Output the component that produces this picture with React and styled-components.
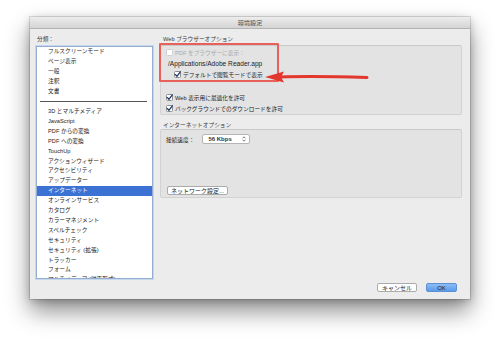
import React from 'react'
import styled, { createGlobalStyle } from 'styled-components'

const Global = createGlobalStyle`
  html, body {
    margin: 0;
    padding: 0;
    background: #fff;
  }
  body {
    font-family: "Liberation Sans", "Noto Sans CJK JP", sans-serif;
    -webkit-font-smoothing: antialiased;
  }
`

const Stage = styled.div`
  width: 499px;
  height: 341px;
  box-sizing: border-box;
  padding: 17px 0 0 30px;
  background: #fff;
  overflow: hidden;
`

const Window = styled.div`
  width: 440px;
  height: 282px;
  background: #ececec;
  display: flex;
  flex-direction: column;
  box-shadow: 0 0 0 1px rgba(0, 0, 0, 0.12), 0 12px 22px rgba(0, 0, 0, 0.45), 0 2px 8px rgba(0, 0, 0, 0.2);
`

const TitleBar = styled.div`
  height: 12px;
  flex: none;
  box-sizing: border-box;
  display: flex;
  align-items: center;
  justify-content: center;
  background: linear-gradient(#ededed, #d4d4d4);
  border-bottom: 1px solid #b3b3b3;
  font-size: 6.2px;
  color: #4a4a4a;
`

const Body = styled.div`
  flex: 1;
  min-height: 0;
  display: flex;
  gap: 7px;
  padding: 0 8px 0 6px;
  font-size: 5.7px;
  color: #1c1c1c;
`

const LeftCol = styled.div`
  width: 117px;
  min-height: 0;
  display: flex;
  flex-direction: column;
  padding-bottom: 20px;
`

const RightCol = styled.div`
  flex: 1;
  display: flex;
  flex-direction: column;
  padding-bottom: 7px;
`

const Caption = styled.div`
  height: ${p => p.$h}px;
  box-sizing: border-box;
  padding: 7px 0 0 ${p => p.$indent}px;
  line-height: 6px;
  color: #3a3a3a;
  flex: none;
`

const List = styled.div`
  flex: 1;
  min-height: 0;
  background: #fff;
  border: 1px solid #93aed0;
  box-shadow: 0 0 0 1px #c8d8ec;
  overflow: hidden;
`

const ListItem = styled.div`
  height: 9.9px;
  line-height: 9.9px;
  padding-left: 11px;
  white-space: nowrap;
  background: ${p => (p.$selected ? '#3b72d3' : 'transparent')};
  color: ${p => (p.$selected ? '#fff' : '#1c1c1c')};
`

const Separator = styled.div`
  height: 10.7px;
  display: flex;
  align-items: center;
  padding: 0 5px 0 3px;

  &::before {
    content: '';
    flex: 1;
    height: 1px;
    background: #555;
  }
`

const Group = styled.div`
  position: relative;
  height: ${p => p.$h}px;
  box-sizing: border-box;
  background: #e3e3e3;
  border: 1px solid #d2d2d2;
  border-top-color: #c9c9c9;
  border-radius: 2px;
  display: flex;
  flex-direction: column;
  padding-top: ${p => p.$pt}px;
  flex: none;
`

const Row = styled.div`
  height: 11px;
  display: flex;
  align-items: center;
  gap: 2px;
  padding-left: ${p => p.$indent}px;
  color: ${p => (p.$disabled ? '#a9a9a9' : '#1c1c1c')};
  white-space: nowrap;
`

const PathRow = styled(Row)`
  font-size: 6.6px;
`

const Spacer = styled.div`
  height: ${p => p.$h}px;
  flex: none;
`

const Select = styled.div`
  width: 48px;
  height: 10px;
  box-sizing: border-box;
  margin-left: 6px;
  background: #fff;
  border: 1px solid #b5b5b5;
  border-radius: 2px;
  display: flex;
  align-items: center;
  justify-content: space-between;
  padding: 0 3px 0 5px;
  font-size: 6px;
  font-weight: bold;
  color: #333;
`

const PushButton = styled.div`
  height: 9px;
  box-sizing: border-box;
  display: flex;
  align-items: center;
  justify-content: center;
  width: ${p => p.$w}px;
  border: 1px solid ${p => (p.$primary ? '#5b8fd6' : '#ababab')};
  border-radius: 2px;
  background: ${p => (p.$primary ? 'linear-gradient(#8cbcf4, #5c9aea)' : '#fff')};
  color: #222;
  white-space: nowrap;
`

const NetButton = styled(PushButton)`
  margin: auto 0 2px 6px;
  font-size: 6px;
`

const Footer = styled.div`
  margin-top: auto;
  display: flex;
  justify-content: flex-end;
  gap: 9px;
  padding-right: 5px;
  font-size: 6px;
`

const Highlight = styled.div`
  position: absolute;
  left: -2px;
  top: -3px;
  width: 120px;
  height: 39px;
  box-sizing: border-box;
  border: 2px solid #e8605a;
  border-radius: 1px;
  pointer-events: none;
`

const Arrow = styled.svg`
  position: absolute;
  left: 104px;
  top: 24px;
`

const Check = ({ checked, disabled }) => (
  <svg width="7" height="7" viewBox="0 0 7 7">
    <rect x="0.5" y="0.5" width="6" height="6" rx="1" fill="#fff" stroke={disabled ? '#cfcfcf' : '#8d8d8d'} />
    {checked && <path d="M1.4 3.6 L2.9 5.3 L6.3 0.8" fill="none" stroke="#1f3a70" strokeWidth="1.3" strokeLinecap="round" strokeLinejoin="round" />}
  </svg>
)

const Stepper = () => (
  <svg width="4" height="6" viewBox="0 0 4 6">
    <path d="M0.5 2.3 L2 0.8 L3.5 2.3 M0.5 3.7 L2 5.2 L3.5 3.7" fill="none" stroke="#555" strokeWidth="0.8" />
  </svg>
)

const categories = [
  'フルスクリーンモード', 'ページ表示', '一般', '注釈', '文書', '-',
  '3D とマルチメディア', 'JavaScript', 'PDF からの変換', 'PDF への変換', 'TouchUp',
  'アクションウィザード', 'アクセシビリティ', 'アップデーター', 'インターネット',
  'オンラインサービス', 'カタログ', 'カラーマネジメント', 'スペルチェック', 'セキュリティ',
  'セキュリティ (拡張)', 'トラッカー', 'フォーム', 'マルチメディア (従来形式)',
]

export default function App() {
  return (
    <Stage>
      <Global />
      <Window>
        <TitleBar>環境設定</TitleBar>
        <Body>
          <LeftCol>
            <Caption $h={17} $indent={1}>分類：</Caption>
            <List>
              {categories.map((c, i) =>
                c === '-' ? <Separator key={i} /> : <ListItem key={i} $selected={c === 'インターネット'}>{c}</ListItem>
              )}
            </List>
          </LeftCol>
          <RightCol>
            <Caption $h={16} $indent={3}>Web ブラウザーオプション</Caption>
            <Group $h={70} $pt={1}>
              <Row $indent={5} $disabled><Check disabled />PDF をブラウザーに表示：</Row>
              <PathRow $indent={7}>/Applications/Adobe Reader.app</PathRow>
              <Row $indent={13}><Check checked />デフォルトで閲覧モードで表示</Row>
              <Spacer $h={11.5} />
              <Row $indent={5}><Check checked />Web 表示用に最適化を許可</Row>
              <Row $indent={5}><Check checked />バックグラウンドでのダウンロードを許可</Row>
              <Highlight />
              <Arrow width="104" height="14" viewBox="0 0 104 14">
                <path d="M15 7 C40 6.2 70 6.6 102 7.4" fill="none" stroke="#e3362c" strokeWidth="3" strokeLinecap="round" />
                <path d="M0 7 L19 1.5 L16 7 L19 12.5 Z" fill="#e3362c" />
              </Arrow>
            </Group>
            <Caption $h={14} $indent={3}>インターネットオプション</Caption>
            <Group $h={69} $pt={3.5}>
              <Row $indent={5}>
                接続速度：
                <Select>56 Kbps<Stepper /></Select>
              </Row>
              <NetButton $w={61}>ネットワーク設定...</NetButton>
            </Group>
            <Footer>
              <PushButton $w={40}>キャンセル</PushButton>
              <PushButton $w={31} $primary>OK</PushButton>
            </Footer>
          </RightCol>
        </Body>
      </Window>
    </Stage>
  )
}
